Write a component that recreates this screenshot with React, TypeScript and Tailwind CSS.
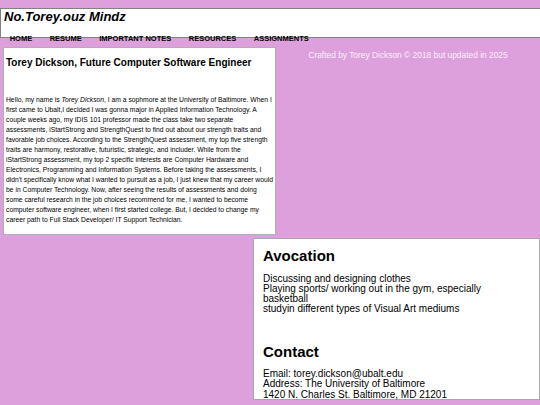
import React from "react";

export default function App() {
  const nav = ["HOME", "RESUME", "IMPORTANT NOTES", "RESOURCES", "ASSIGNMENTS"];
  return (
    <div
      className="w-[540px] h-[405px] overflow-hidden bg-[#dda0dd] text-black"
      style={{ fontFamily: '"Liberation Sans", Arial, sans-serif' }}
    >
      <header className="pt-[8px]">
        <div className="h-[30px] w-[560px] border-y border-l border-[#808080] bg-white pl-[3px] pt-[0px]">
          <h1 className="text-[13px] leading-[15px] font-bold italic">No.Torey.ouz Mindz</h1>
        </div>
        <nav className="-mt-[4.4px] flex gap-[17.5px] pl-[9.7px] text-[7.5px] leading-[9px] font-bold">
          {nav.map((n) => (
            <span key={n}>{n}</span>
          ))}
        </nav>
      </header>

      <div className="mt-[4.4px] flex">
        <section className="ml-[3px] h-[188px] w-[273px] border border-[#b0b0b0] bg-white px-[2px] pt-[9px]">
          <h2 className="text-[10px] leading-[12px] font-bold">
            Torey Dickson, Future Computer Software Engineer
          </h2>
          <p className="mt-[26px] text-[6.75px] leading-[10px]">
            Hello, my name is <i>Torey Dickson</i>, I am a sophmore at the University of Baltimore. When I
            first came to Ubalt,I decided I was gonna major in Applied Information Technology. A couple weeks
            ago, my IDIS 101 professor made the class take two separate assessments, iStartStrong and
            StrengthQuest to find out about our strength traits and favorable job choices. According to the
            StrengthQuest assessment, my top five strength traits are harmony, restorative, futuristic,
            strategic, and includer. While from the iStartStrong assessment, my top 2 specific interests are
            Computer Hardware and Electronics, Programming and Information Systems. Before taking the
            assessments, I didn't specifically know what I wanted to pursuit as a job, I just knew that my
            career would be in Computer Technology. Now, after seeing the results of assessments and doing
            some careful research in the job choices recommend for me, I wanted to become computer software
            engineer, when I first started college. But, I decided to change my career path to Full Stack
            Developer/ IT Support Technician.
          </p>
        </section>
        <aside className="flex-1 pt-[2.75px] text-center text-[8.4px] leading-[10px] text-[#fbf0fb]">
          Crafted by Torey Dickson © 2018 but updated in 2025
        </aside>
      </div>

      <div className="mt-[3px] flex justify-end">
        <section className="h-[162px] w-[287px] border border-[#a8a8a8] bg-white pl-[9px] pt-[8px]">
          <h2 className="text-[15px] leading-[17px] font-bold">Avocation</h2>
          <ul className="mt-[9.5px] pr-[40px] text-[10px] leading-[10.3px]">
            <li>Discussing and designing clothes</li>
            <li>Playing sports/ working out in the gym, especially basketball</li>
            <li>studyin different types of Visual Art mediums</li>
          </ul>
          <h2 className="mt-[28.3px] text-[15px] leading-[17px] font-bold">Contact</h2>
          <div className="mt-[9.2px] text-[10px] leading-[10.3px]">
            <p>Email: torey.dickson@ubalt.edu</p>
            <p>Address: The University of Baltimore</p>
            <p>1420 N. Charles St. Baltimore, MD 21201</p>
          </div>
        </section>
      </div>
    </div>
  );
}
